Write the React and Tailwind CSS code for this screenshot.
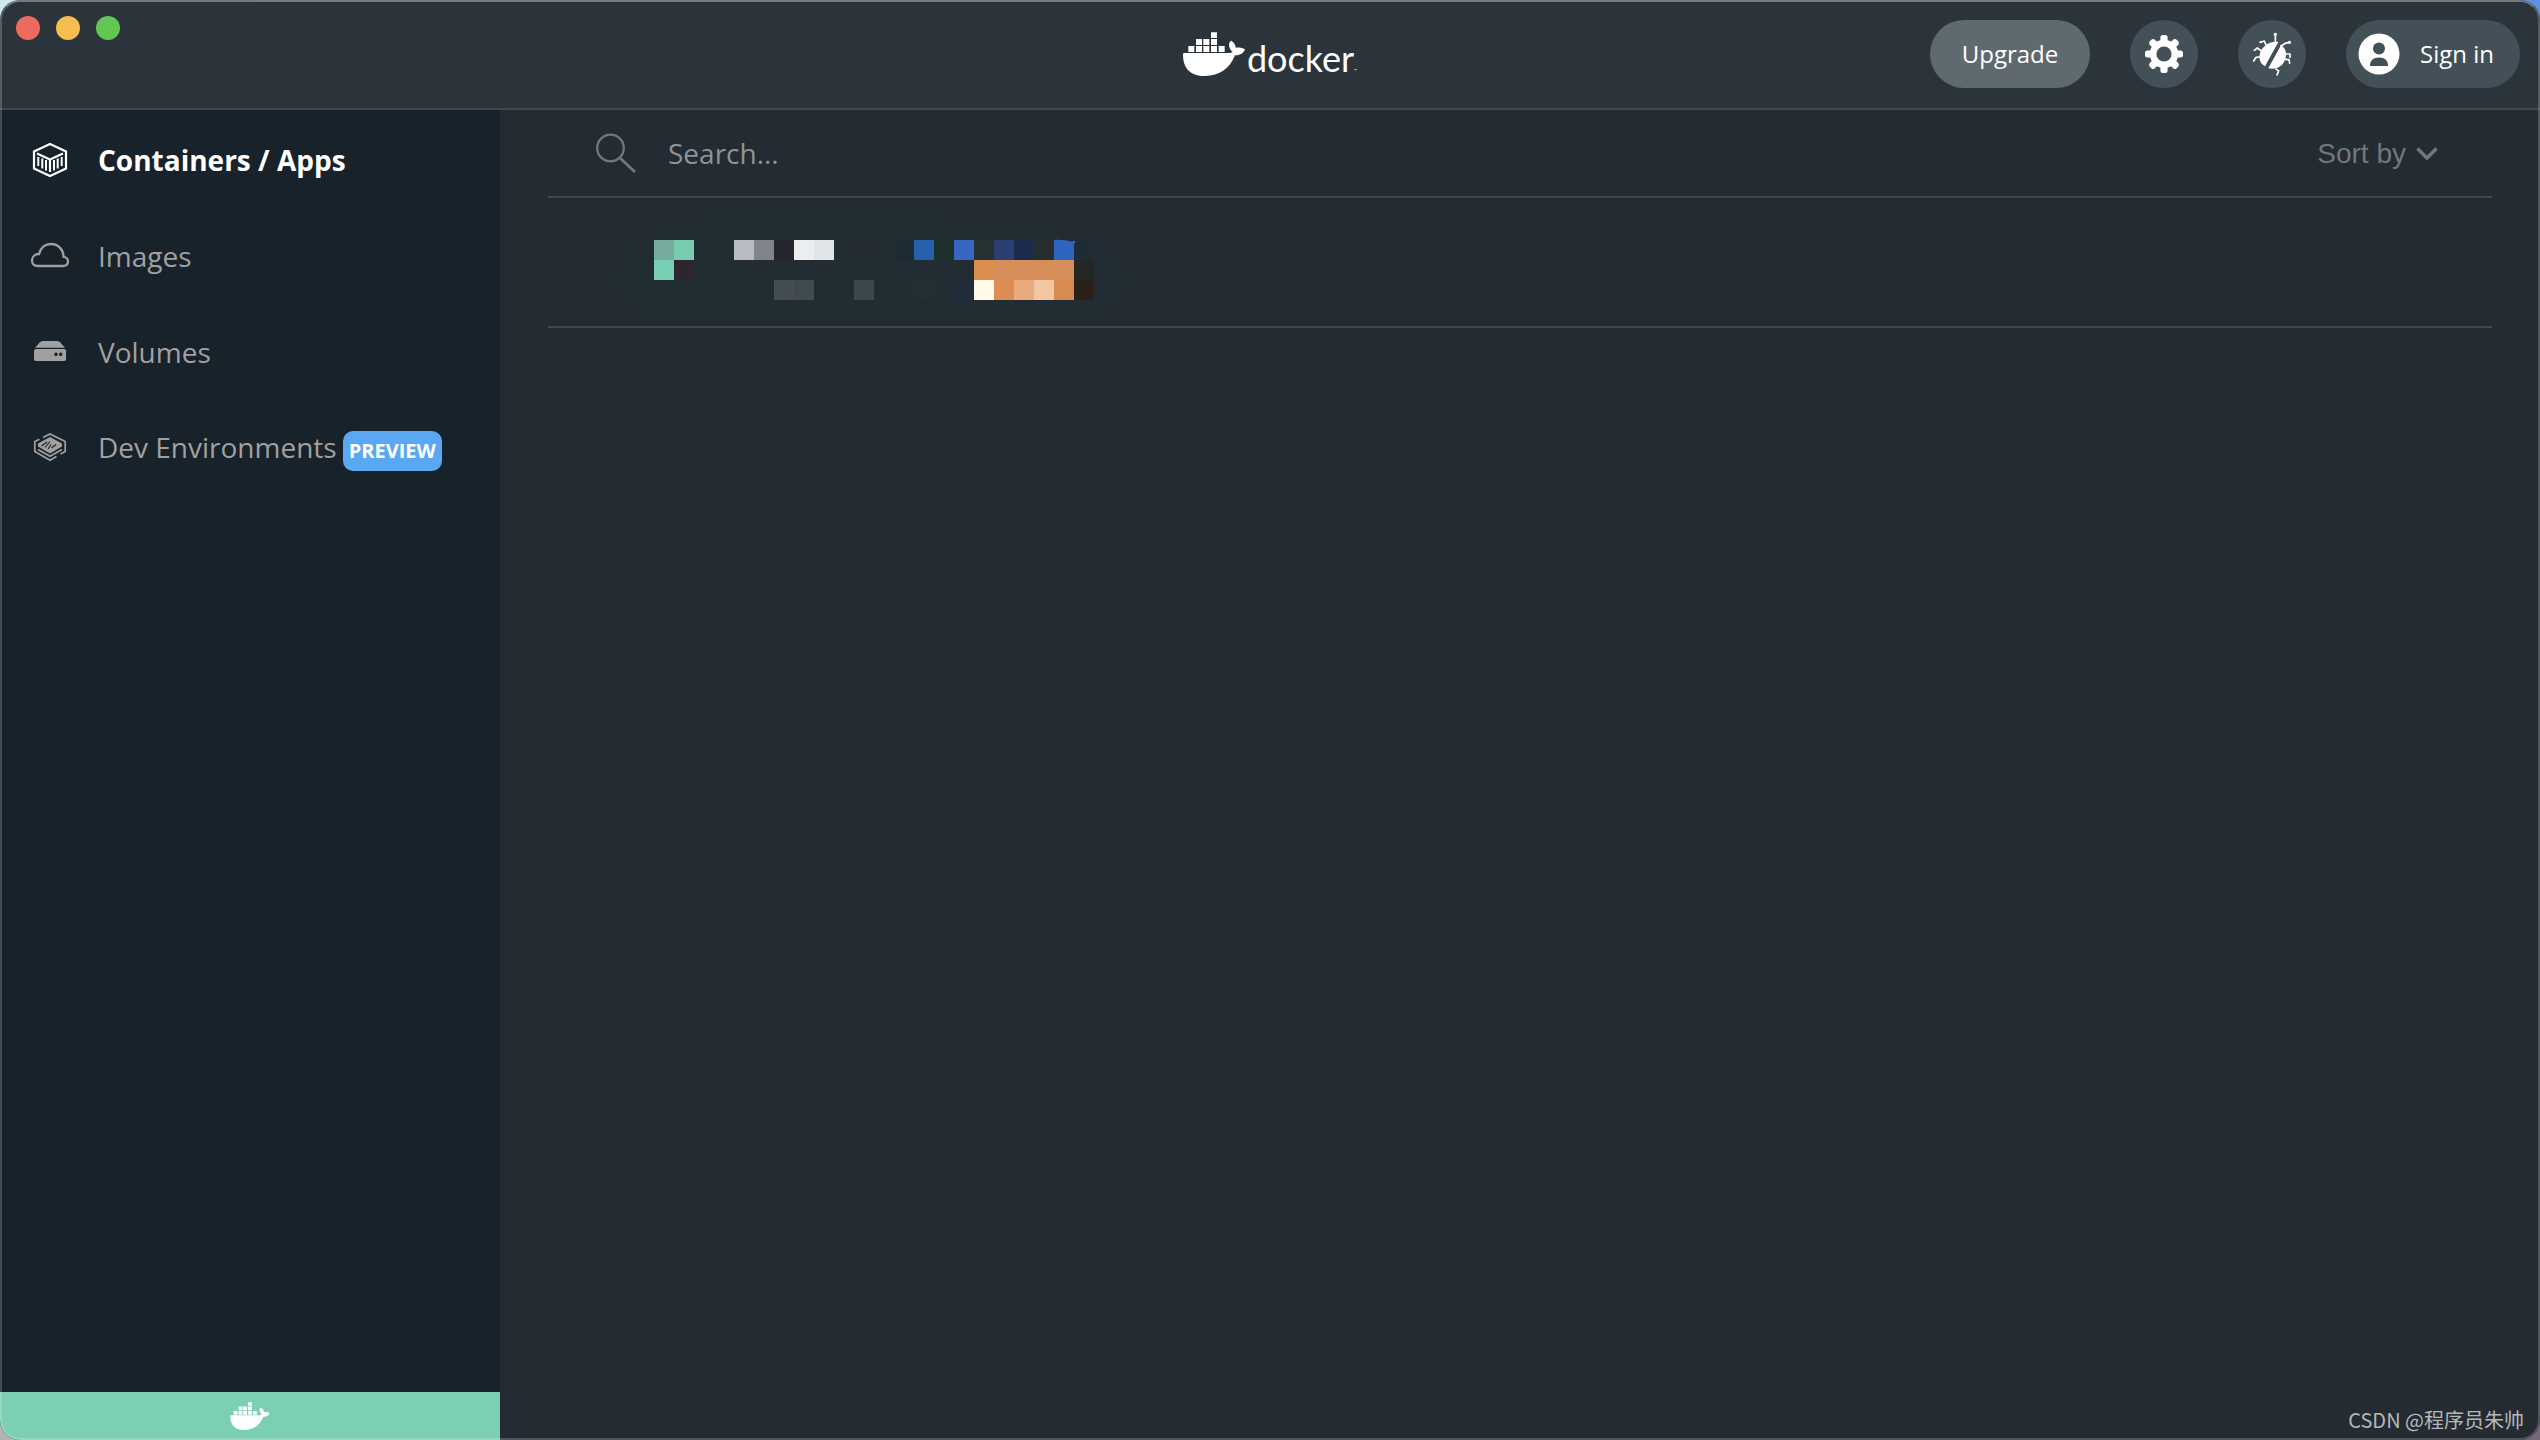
/**
 * Docker Desktop dashboard
 * Title bar, sidebar navigation and the container list
 */

// Blurred-out container entry, 20px blocks: [column, row, colour]
const MOSAIC = [
  [0, 0, '#76ac9f'], [1, 0, '#7accb1'], [4, 0, '#b9bcc2'], [5, 0, '#80858c'],
  [6, 0, '#26272e'], [7, 0, '#ecedef'], [8, 0, '#e0e5ea'], [10, 0, '#242b32'],
  [12, 0, '#1b2c35'], [13, 0, '#2960ab'], [14, 0, '#1e302c'], [15, 0, '#3867c1'],
  [16, 0, '#253432'], [17, 0, '#2b3f73'], [18, 0, '#1a2b4b'], [19, 0, '#282d2d'],
  [20, 0, '#2e65c0'], [21, 0, '#1f2b35'],
  [0, 1, '#77d0b4'], [1, 1, '#2e2531'], [16, 1, '#db8e4f'], [17, 1, '#d68e5b'],
  [18, 1, '#d68e5b'], [19, 1, '#d68e5b'], [20, 1, '#d68e5b'], [21, 1, '#242824'],
  [6, 2, '#434d53'], [7, 2, '#404a4f'], [10, 2, '#3c464b'], [13, 2, '#242f35'],
  [15, 2, '#1e2c3c'], [16, 2, '#fffbe6'], [17, 2, '#dd8d54'], [18, 2, '#e9ab7d'],
  [19, 2, '#f3c7a2'], [20, 2, '#d78a52'], [21, 2, '#2c2119'],
];

const WhaleIcon = ({ className = '' }) => (
  <svg viewBox="0 0 186 132" fill="currentColor" className={className} aria-hidden="true">
    <path d="M84 1h18v17H84zM39 21h18v18H39zM61 21h18v18H61zM84 21h18v18H84zM16 42h18v18H16zM39 42h18v18H39zM61 42h18v18H61zM84 42h18v18H84zM107 42h18v18h-18z" />
    <path d="M4 63H134C141 63 146 62 149 60C142 54 136 42 139 33C140 29 143 26 145 26C153 31 158 38 158 47C168 46 178 47 186 52C182 64 171 71 156 70C141 109 110 132 66 132C20 132 0 106 0 68C0 65 1 63 4 63Z" />
  </svg>
);

const ContainerIcon = () => (
  <svg viewBox="0 0 40 40" fill="none" stroke="currentColor" className="w-10 h-10" aria-hidden="true">
    <path strokeWidth="2.200" d="M20 4 36 11.500V28.500L20 36 4 28.500V11.500Z" />
    <path strokeWidth="2.200" d="M7 13.500 20 19.500 33 13.500M20 19.500V32" />
    <path strokeWidth="2" d="M8.300 17V26M12.300 18.500V28.500M16 20V30.500M24 20V30.500M27.700 18.500V28.500M31.700 17V26" />
  </svg>
);

const CloudIcon = () => (
  <svg viewBox="0 0 40 40" fill="none" stroke="currentColor" strokeWidth="2.300" className="w-10 h-10" aria-hidden="true">
    <path d="M7.500 30H32.500C36 30 38 28 38 25.500C38 23 36 21 33.500 20.800C33.500 13.500 28 8 21 8C15 8 10.500 12 9 18C5 18 2 20.500 2 24.500C2 28 4.500 30 7.500 30Z" />
  </svg>
);

const VolumeIcon = () => (
  <svg viewBox="0 0 40 40" fill="currentColor" className="w-10 h-10" aria-hidden="true">
    <path d="M13 9H27C28 9 29 9.500 30 10.200L35 15.800H5L10 10.200C11 9.500 12 9 13 9Z" />
    <path fillRule="evenodd" d="M6 17H34Q36 17 36 19V27Q36 29 34 29H6Q4 29 4 27V19Q4 17 6 17ZM26 20.600a1.700 1.700 0 1 0 .01 0ZM30.700 20.600a1.700 1.700 0 1 0 .01 0Z" />
  </svg>
);

const DevIcon = () => (
  <svg viewBox="0 0 40 40" fill="none" stroke="currentColor" strokeWidth="1.700" className="w-10 h-10" aria-hidden="true">
    <path d="M13 9.500 20 6 35.200 13.500V23.500L30.500 26M26.500 28.500 20 32.200 4.800 23.500V13.500L9.500 11.200" />
    <path fill="currentColor" stroke="none" d="M20 9 32 15.500V18.500L20 25.500 8 18.500V15.500Z" />
    <path d="M8 21.500 20 28.300 32 21.500" />
    <path stroke="#18222a" strokeWidth="1.100" d="M11.500 18 17 14M15 19.500 20 13.500M18 21 21 16.500M21.500 20 26 16.500" />
  </svg>
);

const GearIcon = () => (
  <svg viewBox="0 0 38 38" fill="currentColor" className="w-[38px] h-[38px]" aria-hidden="true">
    {[0, 45, 90, 135].map((angle) => (
      <rect key={angle} x="15.400" y="0" width="7.200" height="38" rx="2.500" transform={`rotate(${angle} 19 19)`} />
    ))}
    <circle cx="19" cy="19" r="14.200" />
    <circle cx="19" cy="19" r="7.600" fill="#445058" />
  </svg>
);

const BugIcon = () => (
  <svg viewBox="426 36 120 132" fill="currentColor" className="w-10 h-11" aria-hidden="true">
    <path d="M505 66C480 63 457 78 450 100C446 115 449 130 465 139Z" />
    <path d="M513 76C528 85 531 101 526 117C520 138 500 150 475 145Z" />
    <g fill="none" stroke="currentColor" strokeWidth="5" strokeLinecap="round" strokeLinejoin="round">
      <path d="M496 68V43M513 78 526 70 539 67M468 75 463 63 450 67M454 93 442 84 433 91M449 111 438 112 431 123M528 102H540V112M525 118 537 119 539 130M498 147 506 153 501 165" />
    </g>
    <circle cx="496" cy="43" r="5" />
    <circle cx="538" cy="67" r="5" />
  </svg>
);

const AvatarIcon = () => (
  <svg viewBox="0 0 42 42" className="w-[42px] h-[42px]" aria-hidden="true">
    <circle cx="21" cy="21" r="20.500" fill="#fff" />
    <circle cx="21" cy="15.500" r="6" fill="#445058" />
    <path fill="#445058" d="M12 33C12 27.500 15 24.500 21 24.500S30 27.500 30 33Z" />
  </svg>
);

const SearchIcon = () => (
  <svg viewBox="0 0 40 40" fill="none" stroke="currentColor" strokeWidth="2.300" className="w-10 h-10" aria-hidden="true">
    <circle cx="14.500" cy="15" r="13.300" />
    <path strokeWidth="2.800" d="M24 25 39 39" />
  </svg>
);

const NAV_ITEMS = [
  { label: 'Containers / Apps', icon: ContainerIcon, active: true },
  { label: 'Images', icon: CloudIcon },
  { label: 'Volumes', icon: VolumeIcon },
  { label: 'Dev Environments', icon: DevIcon, badge: 'PREVIEW' },
];

const Header = () => (
  <header className="grid grid-cols-[1fr_auto_1fr] h-[110px] bg-[#2c343b] border-b-2 border-[#3f4950]">
    <div className="flex gap-4 p-4">
      <button aria-label="Close" className="w-6 h-6 rounded-full bg-[#ee6a5f]"></button>
      <button aria-label="Minimize" className="w-6 h-6 rounded-full bg-[#f5be4f]"></button>
      <button aria-label="Zoom" className="w-6 h-6 rounded-full bg-[#62c655]"></button>
    </div>

    <div className="flex items-center gap-0.5 text-white">
      <WhaleIcon className="w-[62px] h-11" />
      <span className="pt-2 font-[Lato,sans-serif] text-[36px] leading-10">
        docker<span className="text-[4px] leading-none">™</span>
      </span>
    </div>

    <div className="flex items-center justify-end gap-10 pr-5 text-2xl text-white">
      <button className="h-[68px] w-40 rounded-full bg-[#5f6a70]">Upgrade</button>
      <button aria-label="Settings" className="flex items-center justify-center w-[68px] h-[68px] rounded-full bg-[#445058]">
        <GearIcon />
      </button>
      <button aria-label="Troubleshoot" className="flex items-center justify-center w-[68px] h-[68px] rounded-full bg-[#445058]">
        <BugIcon />
      </button>
      <button className="flex items-center gap-5 h-[68px] pl-3 pr-[26px] rounded-full bg-[#445058]">
        <AvatarIcon />
        Sign in
      </button>
    </div>
  </header>
);

const Sidebar = () => (
  <aside className="flex flex-col w-[500px] shrink-0 bg-[#18222a]">
    <nav className="flex-1 pt-0.5">
      {NAV_ITEMS.map(({ label, icon: Icon, active, badge }) => (
        <a
          key={label}
          href="#"
          className={`flex items-center gap-7 h-24 pl-[30px] text-[28px] ${
            active ? 'font-bold text-white' : 'text-[#a0a0a0]'
          }`}
        >
          <Icon />
          <span className="flex items-baseline gap-1.5">
            {label}
            {badge && (
              <span className="px-1.5 rounded-[10px] bg-[#5aa7f3] text-xl leading-10 font-bold text-white">
                {badge}
              </span>
            )}
          </span>
        </a>
      ))}
    </nav>
    <div className="flex items-center justify-center h-12 bg-[#7acfb4] text-white">
      <WhaleIcon className="w-10 h-7" />
    </div>
  </aside>
);

const ContainerList = () => (
  <main className="flex flex-1 flex-col px-12 bg-[#242b33]">
    <div className="flex items-center h-[88px] pl-12 pr-[54px] border-b-2 border-[#3f464d] text-[28px] text-[#71787b]">
      <label htmlFor="search" className="mr-8">
        <SearchIcon />
      </label>
      <input
        id="search"
        type="text"
        aria-label="Search"
        placeholder="Search..."
        className="flex-1 outline-none placeholder:text-[#8f9495]"
      />
      <label className="flex items-center gap-2.5 pt-0.5 font-['Liberation_Sans',sans-serif]">
        <select aria-label="Sort by" className="appearance-none field-sizing-content bg-transparent">
          <option>Sort by</option>
        </select>
        <svg viewBox="0 0 22 14" fill="none" stroke="currentColor" strokeWidth="3.500" className="w-[22px] h-3.5" aria-hidden="true">
          <path d="M1.500 1.500 11 11 20.500 1.500" />
        </svg>
      </label>
    </div>

    <div className="h-[130px] pt-[42px] pl-[106px] border-b-2 border-[#3f464d]">
      <svg viewBox="0 0 440 60" className="w-[440px] h-[60px] overflow-visible" aria-hidden="true">
        <path fill="#222d33" d="M-42 40C-42 0 -10 -15 60 -28H270C360 -22 478 -5 478 40C478 65 455 80 400 82H40C-10 82 -42 70 -42 40Z" />
        <g shapeRendering="crispEdges">
          {MOSAIC.map(([col, row, fill]) => (
            <rect key={`${col}-${row}`} x={col * 20} y={row * 20} width="20" height="20" fill={fill} />
          ))}
        </g>
        <path fill="#222d33" d="M410 0H420V2Z" />
        <path fill="#3070d8" d="M403 -2h1v1h-1zM419 1h2v2h-2z" />
      </svg>
    </div>

    <p className="mt-auto -mr-8 pb-1.5 text-right font-['Noto_Sans_CJK_SC',sans-serif] text-xl text-[#b5b8ba]">
      CSDN @程序员朱帅
    </p>
  </main>
);

const App = () => (
  // Desktop wallpaper shows behind the rounded window corners
  <div className="min-h-screen flex font-['Open_Sans',sans-serif] bg-[conic-gradient(#5d93dd_25%,#77697a_25%_50%,#b5b3b0_50%_75%,#cfe8ee_75%)]">
    <div className="relative flex flex-1 flex-col overflow-hidden rounded-[20px]">
      <Header />
      <div className="flex flex-1">
        <Sidebar />
        <ContainerList />
      </div>
      {/* Window outline */}
      <div className="absolute inset-0 rounded-[20px] border-2 border-white/20 border-t-white/35 pointer-events-none"></div>
    </div>
  </div>
);

export default App;
